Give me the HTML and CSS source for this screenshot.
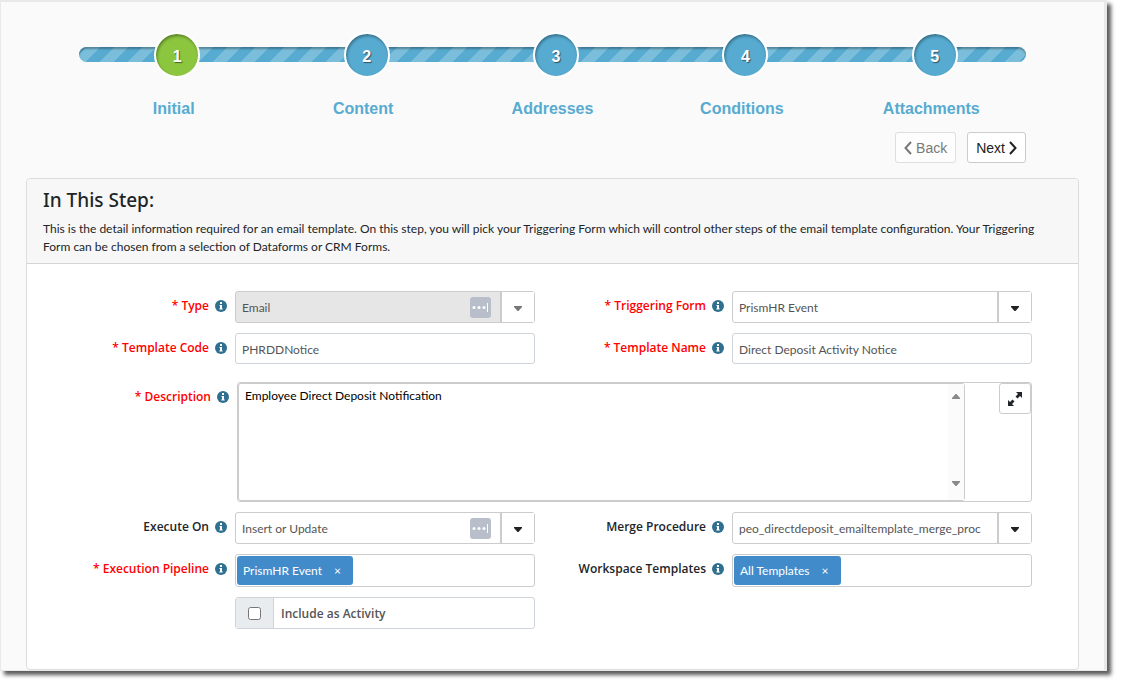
FILE: index.html
```html
<!DOCTYPE html>
<html lang="en">
<head>
  <meta charset="UTF-8" />
  <meta name="viewport" content="width=device-width, initial-scale=1.0"/>
  <title>Email Template Wizard</title>
  <link rel="stylesheet" href="styles.css">
</head>
<body>
  <svg width="0" height="0" class="defs" aria-hidden="true">
    <symbol id="info" viewBox="0 0 12 12">
      <circle cx="6" cy="6" r="6" fill="#2f6f8f"/>
      <path d="M5 2h2v2H5zM4.500 5H7v3.500h.7v1H4.300v-1H5V6h-.5z" fill="#fff"/>
    </symbol>
    <symbol id="caret" viewBox="0 0 8 5">
      <path d="M0 0h8v1L4.500 5h-1L0 1z" fill="currentColor"/>
    </symbol>
    <symbol id="autofill" viewBox="0 0 21 21">
      <rect width="21" height="21" rx="3" fill="#b8bfca"/>
      <circle cx="4" cy="10.500" r="1.500" fill="#fff"/>
      <circle cx="9" cy="10.500" r="1.500" fill="#fff"/>
      <circle cx="14" cy="10.500" r="1.500" fill="#fff"/>
      <path d="M17.500 6v9" stroke="#fff"/>
    </symbol>
  </svg>

  <main class="window">
    <header class="wizard">
      <ol class="steps">
        <li class="active"><span class="marker">1</span><a href="#initial">Initial</a></li>
        <li><span class="marker">2</span><a href="#content">Content</a></li>
        <li><span class="marker">3</span><a href="#addresses">Addresses</a></li>
        <li><span class="marker">4</span><a href="#conditions">Conditions</a></li>
        <li><span class="marker">5</span><a href="#attachments">Attachments</a></li>
      </ol>
      <div class="wizard-nav">
        <button type="button" disabled>
          <svg width="8" height="14" viewBox="0 0 8 14"><path d="M7 1L1.500 7L7 13" fill="none" stroke="currentColor" stroke-width="2"/></svg>
          Back
        </button>
        <button type="button">
          Next
          <svg width="8" height="14" viewBox="0 0 8 14"><path d="M1 1L6.500 7L1 13" fill="none" stroke="currentColor" stroke-width="2"/></svg>
        </button>
      </div>
    </header>

    <section class="panel">
      <div class="panel-head">
        <h2>In This Step:</h2>
        <p>This is the detail information required for an email template. On this step, you will pick your Triggering Form which will control other steps of the email template configuration. Your Triggering Form can be chosen from a selection of Dataforms or CRM Forms.</p>
      </div>

      <form class="panel-body">
        <div class="field required">
          <label for="type">* Type <svg class="info"><use href="#info"/></svg></label>
          <div class="control dropdown disabled">
            <select id="type" disabled><option>Email</option></select>
            <svg class="autofill"><use href="#autofill"/></svg>
            <span class="arrow"><svg><use href="#caret"/></svg></span>
          </div>
        </div>
        <div class="field required">
          <label for="trigger">* Triggering Form <svg class="info"><use href="#info"/></svg></label>
          <div class="control dropdown">
            <select id="trigger"><option>PrismHR Event</option></select>
            <span class="arrow"><svg><use href="#caret"/></svg></span>
          </div>
        </div>

        <div class="field required">
          <label for="code">* Template Code <svg class="info"><use href="#info"/></svg></label>
          <input class="control text" type="text" id="code" value="PHRDDNotice">
        </div>
        <div class="field required">
          <label for="name">* Template Name <svg class="info"><use href="#info"/></svg></label>
          <input class="control text" type="text" id="name" value="Direct Deposit Activity Notice">
        </div>

        <div class="field wide required">
          <label for="description">* Description <svg class="info"><use href="#info"/></svg></label>
          <div class="editor">
            <div class="editor-text">
              <textarea id="description">Employee Direct Deposit Notification</textarea>
              <div class="scroll">
                <svg class="up"><use href="#caret"/></svg>
                <svg><use href="#caret"/></svg>
              </div>
            </div>
            <button type="button" class="expand" aria-label="Expand">
              <svg width="14" height="14" viewBox="0 0 14 14"><path d="M8 0h6v6l-2-2-2.500 2.500-2-2L10 2zM6 14H0V8l2 2 2.500-2.500 2 2L4 12z" fill="#212529"/></svg>
            </button>
          </div>
        </div>

        <div class="field">
          <label for="execute">Execute On <svg class="info"><use href="#info"/></svg></label>
          <div class="control dropdown">
            <select id="execute"><option>Insert or Update</option></select>
            <svg class="autofill"><use href="#autofill"/></svg>
            <span class="arrow"><svg><use href="#caret"/></svg></span>
          </div>
        </div>
        <div class="field">
          <label for="merge">Merge Procedure <svg class="info"><use href="#info"/></svg></label>
          <div class="control dropdown">
            <select id="merge"><option>peo_directdeposit_emailtemplate_merge_proc</option></select>
            <span class="arrow"><svg><use href="#caret"/></svg></span>
          </div>
        </div>

        <div class="field required">
          <label for="pipeline">* Execution Pipeline <svg class="info"><use href="#info"/></svg></label>
          <div class="control tags">
            <span class="tag">PrismHR Event <button type="button" aria-label="Remove PrismHR Event">×</button></span>
            <input type="text" id="pipeline">
          </div>
        </div>
        <div class="field">
          <label for="workspace">Workspace Templates <svg class="info"><use href="#info"/></svg></label>
          <div class="control tags">
            <span class="tag">All Templates <button type="button" aria-label="Remove All Templates">×</button></span>
            <input type="text" id="workspace">
          </div>
        </div>

        <div class="field check">
          <div class="control check-group">
            <span class="check-box"><input type="checkbox" id="activity"></span>
            <label for="activity">Include as Activity</label>
          </div>
        </div>
      </form>
    </section>
  </main>
</body>
</html>
```
FILE: styles.css
```css
* {
  box-sizing: border-box;
}
body {
  margin: 0;
  background: #fff;
  font-family: Lato, "Segoe UI", sans-serif;
  font-size: 12px;
  color: #212529;
}
.defs {
  position: absolute;
}
button, input, select, textarea {
  font: inherit;
}
label {
  font-family: "Open Sans", "Segoe UI", sans-serif;
  font-weight: 600;
}
.window {
  margin: 0 15px 15px 0;
  background: #fafafa;
  border: solid #e9e9e9;
  border-width: 2px 3px 1px 1px;
  box-shadow: 4px 4px 4px rgba(0, 0, 0, 0.65);
}

/* wizard */
.wizard {
  padding: 30px 78px 0;
  font-family: "Liberation Sans", Arial, sans-serif;
}
.steps {
  position: relative;
  display: grid;
  grid-template-columns: repeat(5, 1fr);
  margin: 0;
  padding: 0;
  list-style: none;
}
.steps::before {
  content: "";
  position: absolute;
  top: 15px;
  left: 0;
  right: 0;
  height: 15px;
  border-radius: 8px;
  background: repeating-linear-gradient(135deg, #57abd1 0 5px, #7bbedb 5px 15px, #57abd1 15px 20px);
  box-shadow: inset 0 2px 2px rgba(0, 0, 0, 0.3);
}
.steps li {
  position: relative;
  display: flex;
  flex-direction: column;
  align-items: center;
  gap: 21px;
}
.steps a {
  color: #57abd1;
  font-size: 16px;
  font-weight: bold;
  line-height: 20px;
  text-decoration: none;
}
.marker {
  width: 46px;
  height: 46px;
  margin-left: 7px;
  border: 2px solid #fff;
  border-radius: 50%;
  background: #57abd1;
  box-shadow: inset 1px 2px 3px rgba(0, 0, 0, 0.35);
  color: #fff;
  font-size: 16px;
  font-weight: bold;
  line-height: 45px;
  text-align: center;
  text-shadow: 1px 1px 1px rgba(0, 0, 0, 0.5);
}
.active .marker {
  background: #8cc63f;
}
.wizard-nav {
  display: flex;
  justify-content: flex-end;
  gap: 11px;
  margin-top: 13px;
}
.wizard-nav button {
  display: flex;
  align-items: center;
  gap: 4px;
  height: 31px;
  padding: 0 8px;
  background: #fff;
  border: 1px solid #ccc;
  border-radius: 3px;
  color: #222;
  font-size: 14px;
}
.wizard-nav button:disabled {
  opacity: 0.6;
}

/* panel */
.panel {
  margin: 15px 25px 0;
  background: #fff;
  border: 1px solid #ddd;
  border-radius: 4px;
}
.panel-head {
  padding: 8px 16px 7px;
  background: #f7f7f7;
  border-bottom: 1px solid #d5d5d5;
  border-radius: 4px 4px 0 0;
}
.panel-head h2 {
  margin: 0 0 7px;
  font-family: "Noto Sans", sans-serif;
  font-size: 19px;
  font-weight: 500;
  line-height: 26px;
}
.panel-head p {
  margin: 0;
  line-height: 18px;
}
.panel-body {
  display: grid;
  grid-template-columns: 1fr 1fr;
  row-gap: 10px;
  padding: 27px 46px 40px 11px;
}

/* fields */
.field {
  display: flex;
  align-items: flex-start;
}
.field > label {
  display: flex;
  flex: 0 0 197px;
  align-items: center;
  justify-content: flex-end;
  gap: 6px;
  padding-right: 8px;
  line-height: 30px;
}
.required > label {
  color: #f00;
}
.info {
  width: 12px;
  height: 12px;
}
.control {
  flex: 1;
  min-width: 0;
  height: 32px;
  background: #fff;
  border: 1px solid #ccc;
  border-radius: 3px;
  color: #555;
}
.text {
  height: 31px;
  padding: 2px 6px 0;
  border-color: #ced4da;
}
.dropdown {
  position: relative;
}
.dropdown select {
  appearance: none;
  width: 100%;
  height: 30px;
  padding: 0 40px 0 6px;
  background: none;
  border: 0;
  color: inherit;
  opacity: 1;
}
.arrow {
  position: absolute;
  top: 0;
  right: 0;
  bottom: 0;
  display: flex;
  align-items: center;
  justify-content: center;
  width: 34px;
  background: #fff;
  border-left: 2px solid #ccc;
  color: #222;
  pointer-events: none;
}
.arrow svg {
  width: 8px;
  height: 5px;
  margin-top: 2px;
}
.disabled {
  background: #e6e6e6;
}
.disabled .arrow {
  color: #777;
}
.autofill {
  position: absolute;
  top: 5px;
  right: 43px;
  width: 21px;
  height: 21px;
}

/* description */
.wide {
  grid-column: 1 / -1;
  margin-top: 8px;
}
.wide > label {
  flex-basis: 199px;
}
.editor {
  display: flex;
  flex: 1;
  justify-content: space-between;
  height: 120px;
  border: 1px solid #ccc;
  border-radius: 3px;
}
.editor-text {
  display: flex;
  flex: 1;
  margin-right: 34px;
  border: 1px solid #ccc;
  border-radius: 3px;
}
.editor-text textarea {
  flex: 1;
  padding: 3px 6px;
  background: none;
  border: 0;
  color: #000;
  line-height: 18px;
  resize: none;
}
.scroll {
  display: flex;
  flex-direction: column;
  align-items: center;
  justify-content: space-between;
  width: 16px;
  padding: 10px 0 14px;
  background: #fbfbfb;
  color: #888;
}
.scroll svg {
  width: 10px;
  height: 5px;
}
.scroll .up {
  transform: rotate(180deg);
}
.expand {
  display: flex;
  align-items: center;
  justify-content: center;
  width: 32px;
  height: 31px;
  padding: 0;
  background: #fff;
  border: 1px solid #ccc;
  border-radius: 3px;
}

/* tags */
.tags {
  display: flex;
  height: 33px;
  padding: 1px;
}
.tag {
  display: flex;
  align-items: center;
  gap: 12px;
  padding: 0 12px 0 6px;
  background: #428bca;
  border-radius: 3px;
  color: #fff;
}
.tag button {
  padding: 0;
  background: none;
  border: 0;
  color: inherit;
}
.tags input {
  flex: 1;
  min-width: 0;
  border: 0;
  outline: 0;
}

/* checkbox */
.check {
  padding-left: 197px;
}
.check-group {
  display: flex;
  border-color: #ced4da;
}
.check-box {
  display: flex;
  align-items: center;
  justify-content: center;
  width: 38px;
  background: #e9ecef;
  border-right: 1px solid #ced4da;
}
.check-box input {
  width: 13px;
  height: 13px;
  margin: 0;
}
.check-group label {
  padding: 1px 7px;
  line-height: 30px;
}
```
